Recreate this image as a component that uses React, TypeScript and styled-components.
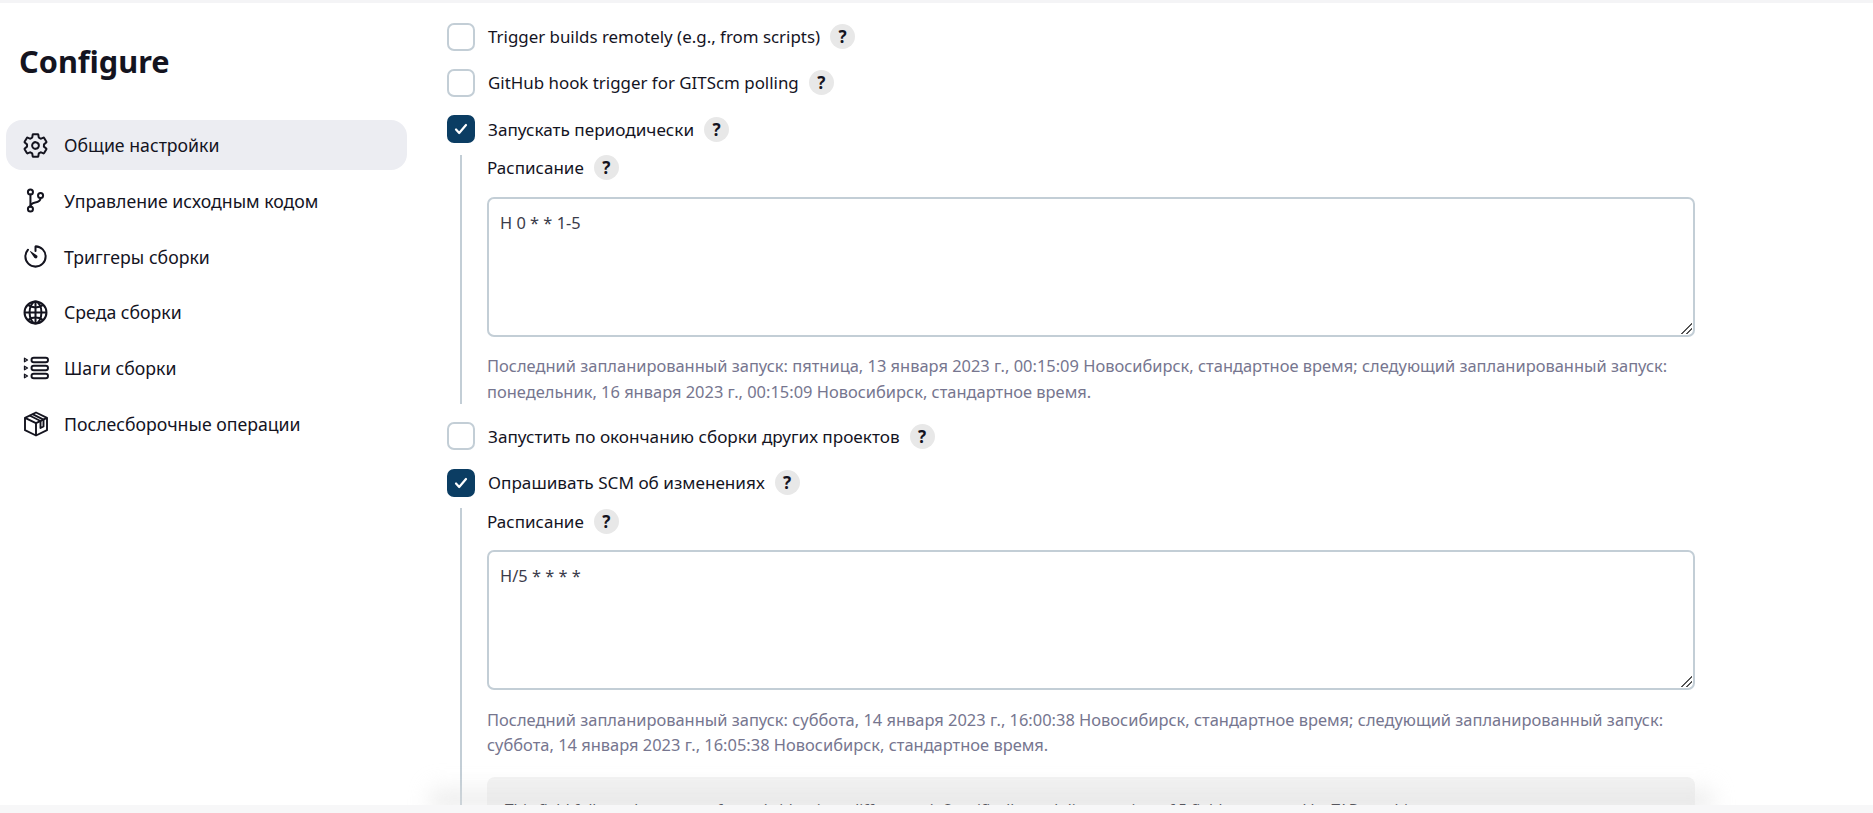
import { ReactNode } from "react";
import styled, { createGlobalStyle } from "styled-components";
import {
  IoSettingsOutline,
  IoGitBranchOutline,
  IoTimerOutline,
  IoGlobeOutline,
} from "react-icons/io5";

const GlobalStyle = createGlobalStyle`
  html, body {
    margin: 0;
    height: 100%;
    overflow: hidden;
    background: #fff;
  }
  body {
    font-family: "Noto Sans", "Liberation Sans", sans-serif;
    color: #14141f;
  }
`;

const StepsIcon = () => (
  <svg width="26" height="26" viewBox="0 0 26 26" fill="none" stroke="currentColor" strokeWidth="1.9">
    <path d="M1.500 3.200v3.600l3-1.800zM1.500 11.200v3.600l3-1.800zM1.500 19.200v3.600l3-1.800z" strokeWidth="1.300" strokeLinejoin="round" />
    <rect x="8.500" y="2.700" width="16.500" height="4.600" rx="2.300" />
    <rect x="8.500" y="10.700" width="16.500" height="4.600" rx="2.300" />
    <rect x="8.500" y="18.700" width="16.500" height="4.600" rx="2.300" />
  </svg>
);

const PackageIcon = () => (
  <svg width="26" height="26" viewBox="0 0 26 26" fill="none" stroke="currentColor" strokeWidth="1.900" strokeLinejoin="round">
    <path d="M13 1.500 24 6.800v12.400L13 24.500 2 19.200V6.800z" />
    <path d="M2 6.800 13 12.200l11-5.400M13 12.200v12.300" />
    <path d="M6.500 4.500 17.500 10v7l3-1.500V8.700L9.500 3.200" />
  </svg>
);

const HelpButton = () => <Help>?</Help>;

type OptionProps = {
  label: string;
  checked?: boolean;
  latin?: boolean;
  children?: ReactNode;
};

const Option = ({ label, checked, latin, children }: OptionProps) => (
  <OptionBlock>
    <OptionRow>
      <CheckBox $checked={checked}>
        {checked && (
          <svg width="14" height="12" viewBox="0 0 14 12" fill="none" stroke="#fff" strokeWidth="2.200" strokeLinecap="round" strokeLinejoin="round">
            <path d="M2 6.500 5.200 10 12 2" />
          </svg>
        )}
      </CheckBox>
      <OptionLabel $latin={latin}>{label}</OptionLabel>
      <HelpButton />
    </OptionRow>
    {children && <Nested>{children}</Nested>}
  </OptionBlock>
);

const Schedule = ({ value, note }: { value: string; note: ReactNode }) => (
  <>
    <FieldTitle>
      <span>Расписание</span>
      <HelpButton />
    </FieldTitle>
    <TextArea defaultValue={value} spellCheck={false} />
    <Note>{note}</Note>
  </>
);

const navItems = [
  { icon: <IoSettingsOutline size={27} />, label: "Общие настройки", active: true },
  { icon: <IoGitBranchOutline size={27} />, label: "Управление исходным кодом" },
  { icon: <IoTimerOutline size={27} />, label: "Триггеры сборки" },
  { icon: <IoGlobeOutline size={27} />, label: "Среда сборки" },
  { icon: <StepsIcon />, label: "Шаги сборки" },
  { icon: <PackageIcon />, label: "Послесборочные операции" },
];

export default function App() {
  return (
    <>
      <GlobalStyle />
      <Page>
        <TopStrip />
        <Columns>
          <Sidebar>
            <Title>Configure</Title>
            <Nav>
              {navItems.map((item) => (
                <NavItem key={item.label} $active={item.active}>
                  <NavIcon>{item.icon}</NavIcon>
                  {item.label}
                </NavItem>
              ))}
            </Nav>
          </Sidebar>
          <Main>
            <Option label="Trigger builds remotely (e.g., from scripts)" latin />
            <Option label="GitHub hook trigger for GITScm polling" latin />
            <Option label="Запускать периодически" checked>
              <Schedule
                value="H 0 * * 1-5"
                note={
                  <>
                    Последний запланированный запуск: пятница, 13 января 2023 г., 00:15:09 Новосибирск, стандартное время; следующий запланированный запуск:
                    <br />
                    понедельник, 16 января 2023 г., 00:15:09 Новосибирск, стандартное время.
                  </>
                }
              />
            </Option>
            <Option label="Запустить по окончанию сборки других проектов" />
            <Option label="Опрашивать SCM об изменениях" checked>
              <Schedule
                value="H/5 * * * *"
                note={
                  <>
                    Последний запланированный запуск: суббота, 14 января 2023 г., 16:00:38 Новосибирск, стандартное время; следующий запланированный запуск:
                    <br />
                    суббота, 14 января 2023 г., 16:05:38 Новосибирск, стандартное время.
                  </>
                }
              />
              <HelpPanel>
                This field follows the syntax of cron (with minor differences). Specifically, each line consists of 5 fields separated by TAB or whitespace:
              </HelpPanel>
            </Option>
          </Main>
        </Columns>
        <BottomFade />
        <BottomBar />
      </Page>
    </>
  );
}

const Page = styled.div`
  position: relative;
  width: 100%;
  height: 813px;
  overflow: hidden;
`;

const TopStrip = styled.div`
  height: 3px;
  background: #f4f4f6;
`;

const Columns = styled.div`
  display: flex;
`;

const Sidebar = styled.aside`
  width: 407px;
  flex: none;
  padding: 38px 0 0 6px;
  box-sizing: border-box;
`;

const Title = styled.h1`
  margin: 0 0 38px 13px;
  font-size: 30.700px;
  line-height: 41px;
  font-weight: 700;
  color: #14141f;
`;

const Nav = styled.nav`
  display: flex;
  flex-direction: column;
  gap: 5.800px;
`;

const NavItem = styled.div<{ $active?: boolean }>`
  display: flex;
  align-items: center;
  height: 50px;
  padding-left: 16px;
  border-radius: 16px;
  font-size: 17.700px;
  color: #14141f;
  background: ${(p) => (p.$active ? "#ecedf2" : "transparent")};
`;

const NavIcon = styled.span`
  display: flex;
  width: 27px;
  justify-content: center;
  margin-right: 15px;

  svg[width="27"] [stroke-width] {
    stroke-width: 38px;
  }
`;

const Main = styled.main`
  flex: 1;
  padding: 19.500px 178px 0 40px;
`;

const OptionBlock = styled.div`
  margin-bottom: 18.300px;
`;

const OptionRow = styled.div`
  display: flex;
  align-items: center;
  height: 28px;
`;

const CheckBox = styled.span<{ $checked?: boolean }>`
  display: flex;
  align-items: center;
  justify-content: center;
  box-sizing: border-box;
  width: 28px;
  height: 28px;
  flex: none;
  border-radius: 7px;
  border: 2.500px solid ${(p) => (p.$checked ? "#0b3d63" : "#c3ced6")};
  background: ${(p) => (p.$checked ? "#0b3d63" : "#fff")};
`;

const OptionLabel = styled.span<{ $latin?: boolean }>`
  margin-left: 13px;
  font-size: ${(p) => (p.$latin ? "16.900px" : "17.150px")};
  color: #14141f;
`;

const Help = styled.span`
  display: inline-flex;
  align-items: center;
  justify-content: center;
  width: 25px;
  height: 25px;
  margin-left: 10px;
  border-radius: 50%;
  background: #e8e8e8;
  font-size: 17px;
  font-weight: 700;
  color: #14141f;
`;

const Nested = styled.div`
  margin: 11.500px 0 2.200px 13px;
  padding-left: 25px;
  border-left: 2px solid #c3ced6;
`;

const FieldTitle = styled.div`
  display: flex;
  align-items: center;
  height: 26px;
  margin-bottom: 16px;
  font-size: 17px;
  color: #14141f;
`;

const TextArea = styled.textarea`
  display: block;
  box-sizing: border-box;
  width: 100%;
  height: 140px;
  padding: 12px 11px;
  border: 2px solid #c3ced6;
  border-radius: 7px;
  outline: none;
  resize: vertical;
  font-family: inherit;
  font-size: 16.400px;
  line-height: 24px;
  color: #3b3b4a;

  &::-webkit-resizer {
    background: linear-gradient(
        135deg,
        transparent 0 46%,
        #555 46% 56%,
        transparent 56% 70%,
        #555 70% 80%,
        transparent 80%
      )
      right 1px bottom 1px / 11px 11px no-repeat;
  }
`;

const Note = styled.p`
  margin: 16.500px 0 0;
  font-size: 16.450px;
  line-height: 25.500px;
  color: #76768f;
`;

const HelpPanel = styled.div`
  margin-top: 19.500px;
  height: 80px;
  padding: 21.500px 18px;
  border-radius: 8px;
  background: #f3f3f3;
  font-size: 15.400px;
  line-height: 24px;
`;

const BottomFade = styled.div`
  position: absolute;
  left: 430px;
  right: 160px;
  bottom: 4px;
  height: 28px;
  background: linear-gradient(to bottom, rgba(220, 220, 220, 0), rgba(220, 220, 220, 0.75));
  filter: blur(10px);
  pointer-events: none;
`;

const BottomBar = styled.div`
  position: absolute;
  left: 0;
  right: 0;
  bottom: 0;
  height: 8px;
  background: #f7f7f8;
`;
